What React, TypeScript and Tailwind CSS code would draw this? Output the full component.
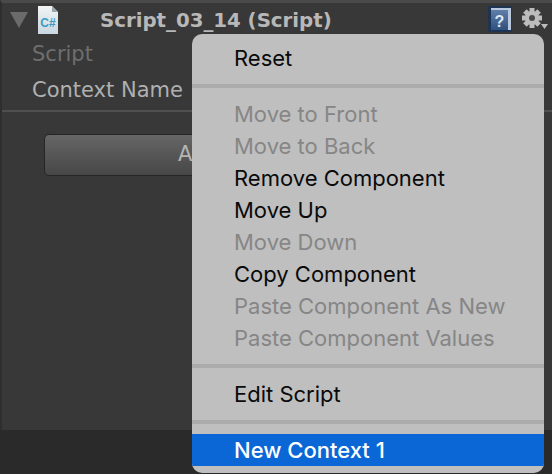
const font = { fontFamily: '"Inter", "Liberation Sans", sans-serif' };
const wide = { fontFamily: '"DejaVu Sans", "Liberation Sans", sans-serif' };

type Item = { label: string; off?: boolean } | "sep";

const items: Item[] = [
  { label: "Reset" },
  "sep",
  { label: "Move to Front", off: true },
  { label: "Move to Back", off: true },
  { label: "Remove Component" },
  { label: "Move Up" },
  { label: "Move Down", off: true },
  { label: "Copy Component" },
  { label: "Paste Component As New", off: true },
  { label: "Paste Component Values", off: true },
  "sep",
  { label: "Edit Script" },
  "sep",
];

function CsIcon() {
  return (
    <svg width="20" height="28" viewBox="0 0 20 28" className="shrink-0">
      <defs>
        <linearGradient id="page" x1="0" y1="0" x2="0" y2="1">
          <stop offset="0" stopColor="#f2f4f5" />
          <stop offset="1" stopColor="#c9d8e0" />
        </linearGradient>
      </defs>
      <path d="M0 0H14L20 6V28H0Z" fill="url(#page)" />
      <path d="M14 0V6H20Z" fill="#9aa5ab" />
      <text x="10" y="21" textAnchor="middle" fontSize="12" fontWeight="600" fill="#3d9bc4" fontFamily="Liberation Sans, sans-serif">C#</text>
    </svg>
  );
}

function HelpIcon() {
  return (
    <svg width="24" height="26" viewBox="0 0 24 26" className="shrink-0">
      <defs>
        <linearGradient id="help" x1="0" y1="0" x2="0" y2="1">
          <stop offset="0" stopColor="#5f7fa8" />
          <stop offset="1" stopColor="#2f5180" />
        </linearGradient>
      </defs>
      <rect x="0" y="0" width="24" height="26" fill="#1f3352" />
      <rect x="3" y="2" width="20" height="22" fill="#b9c8dc" />
      <rect x="3" y="4" width="17" height="20" fill="url(#help)" />
      <text x="11.5" y="21" textAnchor="middle" fontSize="16" fontWeight="700" fill="#dfe7f0" fontFamily="Liberation Sans, sans-serif">?</text>
    </svg>
  );
}

function GearIcon() {
  const teeth = [0, 45, 90, 135];
  return (
    <svg width="26" height="22" viewBox="0 0 26 22" className="shrink-0">
      {teeth.map((a) => (
        <rect key={a} x="7.5" y="0" width="5" height="20" fill="#bcbcbc" transform={`rotate(${a} 10 10)`} />
      ))}
      <circle cx="10" cy="10" r="7" fill="#bcbcbc" />
      <circle cx="10" cy="10" r="3" fill="#4a4a4a" />
      <path d="M19 16H26L22.5 21Z" fill="#bcbcbc" />
    </svg>
  );
}

export default function App() {
  return (
    <div className="relative w-[552px] h-[474px] overflow-hidden bg-[#2a2a2a]" style={font}>
      <div className="h-[430px] bg-[#383838] border-t-[3px] border-l-[2px] border-t-[#4a4a4a] border-l-[#2e2e2e]">
        <div className="h-[34px] flex items-center pl-[8px] pr-[4px]">
          <div className="w-0 h-0 border-l-[9px] border-r-[9px] border-t-[16px] border-l-transparent border-r-transparent border-t-[#6b6b6b]" />
          <div className="ml-[10px]"><CsIcon /></div>
          <div className="ml-[42px] pt-[2px] text-[19.75px] font-bold text-[#b8b8b8] leading-none whitespace-nowrap" style={wide}>Script_03_14 (Script)</div>
          <div className="ml-auto flex items-center gap-[10px] mb-[2px]">
            <HelpIcon />
            <GearIcon />
          </div>
        </div>
        <div className="mt-[1px] pl-[30px] h-[33px] flex items-center text-[21px] text-[#6e6e6e] leading-none" style={wide}>Script</div>
        <div className="pl-[30px] h-[38px] flex items-center text-[21px] text-[#b0b0b0] leading-none whitespace-nowrap" style={wide}>Context Name</div>
        <div className="mt-[1px] h-[2px] bg-[#4f4f4f]" />
        <div className="mt-[22px] ml-[42px] w-[422px] h-[42px] rounded-[5px] border border-[#262626] bg-gradient-to-b from-[#666666] to-[#474747] flex items-center pl-[133px] text-[21px] text-[#b4b4b4] whitespace-nowrap" style={wide}>
          A
        </div>
      </div>
      <div className="absolute left-[192px] top-[34px] w-[352px] h-[439px] rounded-[10px] bg-[#bfbfbf] overflow-hidden pt-[8px]">
        {items.map((it, i) =>
          it === "sep" ? (
            <div key={i} className="h-[24px] flex items-center">
              <div className="w-full h-[4px] bg-[#acacac]" />
            </div>
          ) : (
            <div key={i} className={`h-[32px] pl-[42px] flex items-center text-[22px] leading-none whitespace-nowrap ${it.off ? "text-[#868686]" : "text-[#0a0a0a]"}`}>
              {it.label}
            </div>
          )
        )}
        <div className="h-[32px] pl-[42px] flex items-center text-[22px] leading-none font-medium text-white bg-[#0b67d6] whitespace-nowrap">New Context 1</div>
      </div>
    </div>
  );
}
